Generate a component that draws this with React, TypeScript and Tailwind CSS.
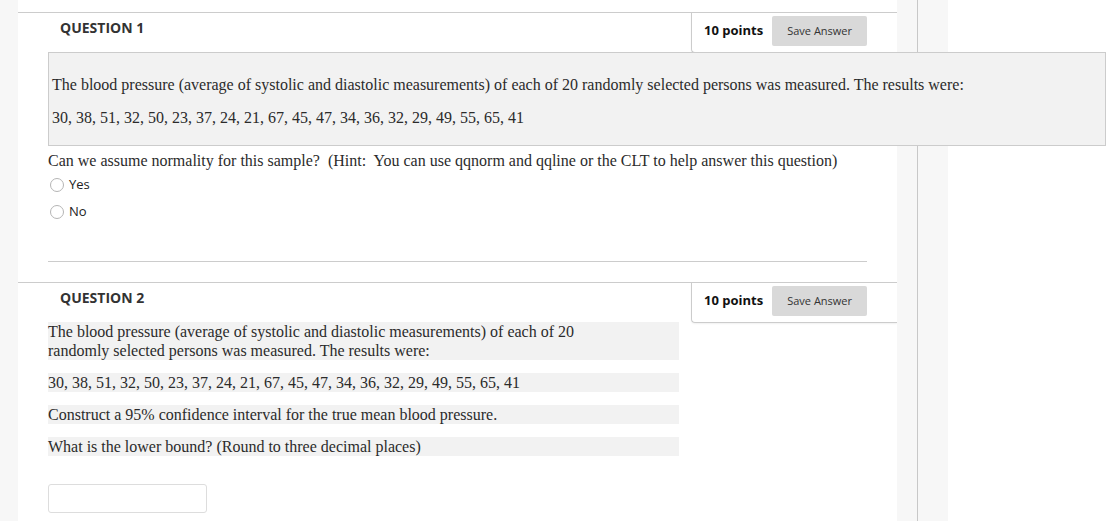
import React from "react";

const sans = "font-['Open_Sans',_'Liberation_Sans',_sans-serif]";
const serif = "font-['Liberation_Serif',_'Times_New_Roman',_serif]";

function QuestionHeader({ n }: { n: number }) {
  return (
    <div className="flex h-[40px] items-start justify-between border-t border-[#cccccc]">
      <h2 className={`${sans} pl-[42px] pt-[5px] text-[14px] font-bold leading-[20px] text-[#333333]`}>
        QUESTION {n}
      </h2>
      <div className="flex h-[40px] w-[206px] shrink-0 items-start rounded-bl-[4px] border-b border-l border-[#cccccc] pl-[12px] shadow-[0_1px_2px_rgba(0,0,0,0.06)]">
        <div className="mt-[3px] flex h-[30px] items-center gap-[9px]">
          <span className={`${sans} text-[13px] font-bold text-[#111111]`}>10 points</span>
          <button
            type="button"
            className={`${sans} h-[30px] w-[95px] rounded-[2px] bg-[#d9d9d9] text-[11px] text-[#333333]`}
          >
            Save Answer
          </button>
        </div>
      </div>
    </div>
  );
}

function Radio({ label }: { label: string }) {
  return (
    <label className="flex h-[27px] items-center gap-[5px] pl-[2px]">
      <span className="h-[14px] w-[14px] rounded-full border border-[#b5b5b5] bg-white" />
      <span className={`${sans} text-[13px] text-[#222222]`}>{label}</span>
    </label>
  );
}

const data = "30, 38, 51, 32, 50, 23, 37, 24, 21, 67, 45, 47, 34, 36, 32, 29, 49, 55, 65, 41";

export default function App() {
  return (
    <div className="flex h-[521px] w-[1106px] overflow-hidden bg-white">
      <div className="w-[18px] shrink-0 bg-[#f7f7f7]" />

      <main className="w-[879px] shrink-0 pt-[12px]">
        {/* Question 1 */}
        <section>
          <QuestionHeader n={1} />
          <div
            className={`${serif} relative z-10 ml-[30px] w-[1058px] border border-[#cccccc] bg-[#f2f2f2] pb-[17px] pl-[3px] pt-[22px] text-[16px] leading-[20px] text-[#2b2b2b]`}
          >
            <p>
              The blood pressure (average of systolic and diastolic measurements) of each of 20 randomly selected
              persons was measured. The results were:
            </p>
            <p className="mt-[13px]">{data}</p>
          </div>
          <div className="ml-[30px] mt-[5px]">
            <p className={`${serif} whitespace-pre text-[16px] leading-[20px] text-[#2b2b2b]`}>
              Can we assume normality for this sample?  (Hint:  You can use qqnorm and qqline or the CLT to help
              answer this question)
            </p>
            <div>
              <Radio label="Yes" />
              <Radio label="No" />
            </div>
            <div className="mt-[36px] h-px w-[819px] bg-[#cccccc]" />
          </div>
        </section>

        {/* Question 2 */}
        <section className="mt-[20px]">
          <QuestionHeader n={2} />
          <div className={`${serif} ml-[30px] w-[631px] text-[16px] leading-[19px] text-[#2b2b2b]`}>
            <p className="bg-[#f2f2f2]">
              The blood pressure (average of systolic and diastolic measurements) of each of 20
              <br />
              randomly selected persons was measured. The results were:
            </p>
            <p className="mt-[13px] bg-[#f2f2f2]">{data}</p>
            <p className="mt-[13px] bg-[#f2f2f2]">Construct a 95% confidence interval for the true mean blood pressure.</p>
            <p className="mt-[13px] bg-[#f2f2f2]">What is the lower bound? (Round to three decimal places)</p>
            <input
              type="text"
              className="mt-[28px] block h-[29px] w-[159px] rounded-[3px] border border-[#dddddd] bg-white"
            />
          </div>
        </section>
      </main>

      <aside className="w-[51px] shrink-0 bg-[#f7f7f7] pl-[20px]">
        <div className="h-full border-l border-[#c8c8c8]" />
      </aside>
      <div className="flex-1 bg-white" />
    </div>
  );
}
